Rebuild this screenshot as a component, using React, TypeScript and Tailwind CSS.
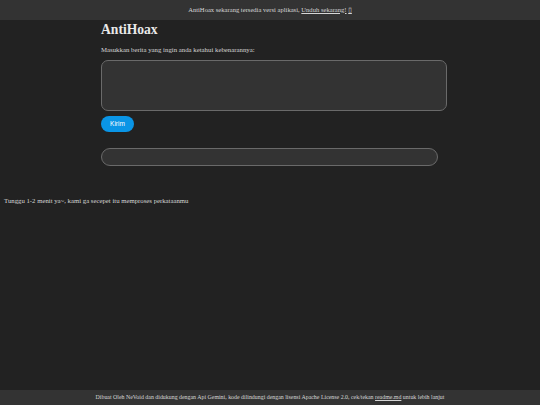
import React, { useState } from 'react';

const serif = { fontFamily: '"Liberation Serif", "DejaVu Serif", serif' };

const App: React.FC = () => {
  const [text, setText] = useState<string>('');

  return (
    <div className="min-h-[405px] w-full bg-[#222222] flex flex-col text-[#e6e6e6]" style={serif}>
      {/* Banner */}
      <div className="h-[20px] pb-[1px] bg-[#333333] flex items-center justify-center text-[6.6px] text-[#d6d6d6]">
        <span>
          AntiHoax sekarang tersedia versi aplikasi,{' '}
          <a className="underline">Unduh sekarang!</a> <span className="underline">▯</span>
        </span>
      </div>

      {/* Main */}
      <main className="ml-[101px] w-[346px] flex flex-col">
        <h1 className="text-[13.6px] leading-[20px] font-bold text-[#e8e8e8]">AntiHoax</h1>
        <p className="mt-[5px] text-[6.8px] leading-[9px] text-[#d6d6d6]">
          Masukkan berita yang ingin anda ketahui kebenarannya:
        </p>
        <textarea
          value={text}
          onChange={(e) => setText(e.target.value)}
          className="mt-[6px] h-[51px] w-[346px] resize-none rounded-[7px] border border-[#6a6a6a] bg-[#333333] outline-none"
        />
        <button
          className="mt-[5px] h-[16px] w-[33px] rounded-full bg-[#0a95e6] text-[6.5px] text-white"
          style={{ fontFamily: '"Liberation Sans", Arial, sans-serif' }}
        >
          Kirim
        </button>
        <div className="mt-[16px] h-[18px] w-[337px] rounded-full border border-[#6a6a6a] bg-[#333333]" />
      </main>

      <p className="mt-[30px] ml-[4px] text-[6.75px] leading-[9px] text-[#d6d6d6]">
        Tunggu 1-2 menit ya~, kami ga secepet itu memproses perkataanmu
      </p>

      <div className="flex-1" />

      {/* Footer */}
      <footer className="h-[15px] bg-[#333333] flex items-center justify-center text-[5.9px] text-[#d6d6d6]">
        <span>
          Dibuat Oleh NeVoid dan didukung dengan Api Gemini, kode dilindungi dengan lisensi Apache License 2.0, cek/tekan{' '}
          <a className="underline">readme.md</a> untuk lebih lanjut
        </span>
      </footer>
    </div>
  );
};

export default App;
